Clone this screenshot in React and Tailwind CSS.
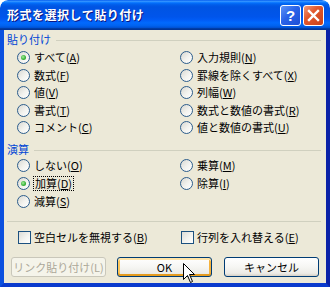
import React from "react";

function Radio({ checked }) {
  return (
    <span className="w-[13px] h-[13px] shrink-0 rounded-full border border-[#2c5d8c] bg-[linear-gradient(135deg,#d8d8d2_0%,#f3f3ef_55%,#ffffff_100%)] flex items-center justify-center">
      {checked && (
        <span className="w-[5px] h-[5px] rounded-full bg-[radial-gradient(circle_at_40%_40%,#a6ee9c_0%,#3cb43c_55%,#1e8f1e_100%)]" />
      )}
    </span>
  );
}

function Check() {
  return (
    <span className="w-[13px] h-[13px] shrink-0 border border-[#1c5180] bg-[linear-gradient(135deg,#dcdcd7_0%,#f3f3ef_55%,#ffffff_100%)]" />
  );
}

function RadioItem({ checked, label, k, focus }) {
  return (
    <div className="flex items-center h-full">
      <Radio checked={checked} />
      <span
        className={
          focus
            ? "ml-[3px] px-[1px] leading-[13px] border border-dotted border-black"
            : "ml-[4px] leading-[13px]"
        }
      >
        {label}(<u className="underline-offset-[1px]">{k}</u>)
      </span>
    </div>
  );
}

function GroupLabel({ text, cls }) {
  return (
    <div className={"flex items-center pl-[3px] pr-[5px] " + cls}>
      <span className="text-[#0046d5] leading-none">{text}</span>
      <span className="flex-1 h-px ml-[5px] bg-[#d0d0bf] mt-[2px]" />
    </div>
  );
}

export default function App() {
  return (
    <div className="relative w-[330px] h-[287px] flex flex-col overflow-hidden rounded-t-[8px] bg-white text-[11px] text-black [font-family:'Noto_Sans_CJK_JP','Noto_Sans',sans-serif]">
      {/* title bar */}
      <div className="h-[30px] shrink-0 flex items-center pl-[7px] pr-[6px] rounded-t-[8px] bg-[linear-gradient(to_bottom,#0058ee_0%,#3593ff_4%,#288eff_6%,#127dff_8%,#036ffc_10%,#0262ee_14%,#0057e5_20%,#0054e3_24%,#0055eb_56%,#005bf5_66%,#026afe_76%,#0062ef_86%,#0052d6_92%,#0040ab_94%,#003092_100%)]">
        <span className="text-white font-bold text-[12px] tracking-[0.5px] [text-shadow:1px_1px_0_#0a1883]">
          形式を選択して貼り付け
        </span>
        <div className="ml-auto flex gap-[2px]">
          <div className="w-[21px] h-[21px] rounded-[3px] border border-white bg-[linear-gradient(135deg,#5e94f6_0%,#2a63e8_45%,#1c4fd6_100%)] flex items-center justify-center text-white font-bold text-[15px] leading-none [font-family:'Liberation_Sans',sans-serif]">
            ?
          </div>
          <div className="w-[21px] h-[21px] rounded-[3px] border border-white bg-[linear-gradient(135deg,#f09a7c_0%,#e2582d_40%,#c9411a_100%)] flex items-center justify-center">
            <svg width="13" height="13" viewBox="0 0 13 13">
              <path d="M2 2 L11 11 M11 2 L2 11" stroke="white" strokeWidth="2.4" strokeLinecap="square" />
            </svg>
          </div>
        </div>
      </div>

      {/* body with frame */}
      <div className="flex-1 flex flex-col border-l-[4px] border-r-[4px] border-b-[4px] border-l-[#0b50df] border-r-[#0a22a8] border-b-[#0a3acd] bg-[#ece9d8]">
        <GroupLabel text="貼り付け" cls="h-[19px]" />
        <div className="grid grid-cols-[163px_1fr] grid-rows-[repeat(5,17.5px)] pl-[13px]">
          <RadioItem checked label="すべて" k="A" />
          <RadioItem label="入力規則" k="N" />
          <RadioItem label="数式" k="F" />
          <RadioItem label="罫線を除くすべて" k="X" />
          <RadioItem label="値" k="V" />
          <RadioItem label="列幅" k="W" />
          <RadioItem label="書式" k="T" />
          <RadioItem label="数式と数値の書式" k="R" />
          <RadioItem label="コメント" k="C" />
          <RadioItem label="値と数値の書式" k="U" />
        </div>

        <GroupLabel text="演算" cls="h-[14px] mt-[5.5px]" />
        <div className="grid grid-cols-[163px_1fr] grid-rows-[repeat(3,18px)] pl-[13px]">
          <RadioItem label="しない" k="O" />
          <RadioItem label="乗算" k="M" />
          <RadioItem checked focus label="加算" k="D" />
          <RadioItem label="除算" k="I" />
          <RadioItem label="減算" k="S" />
        </div>

        <div className="h-px mt-[11px] ml-[3px] mr-[5px] bg-[#d0d0bf]" />

        <div className="h-[18px] mt-[6.5px] grid grid-cols-[163px_1fr] pl-[14px]">
          <div className="flex items-center">
            <Check />
            <span className="ml-[3px]">
              空白セルを無視する(<u>B</u>)
            </span>
          </div>
          <div className="flex items-center">
            <Check />
            <span className="ml-[3px]">
              行列を入れ替える(<u>E</u>)
            </span>
          </div>
        </div>

        <div className="h-[20px] mt-[10.5px] flex pl-[7px]">
          <div className="w-[95px] h-[20px] rounded-[3px] border border-[#c9c7ba] bg-[#f5f4ea] text-[#aca899] flex items-center justify-center">
            リンク貼り付け(L)
          </div>
          <div className="ml-[11px] w-[95px] h-[20px] rounded-[3px] border border-[#003c74] bg-[linear-gradient(to_bottom,#ffffff_0%,#f6f6f3_50%,#ecebe6_85%,#d6d0c5_100%)] shadow-[inset_0_2px_0_#ffe4a8,inset_0_-2px_0_#e59b1f,inset_2px_0_0_#fbc65c,inset_-2px_0_0_#f5b23c] flex items-center justify-center">
            OK
          </div>
          <div className="ml-[12px] w-[95px] h-[20px] rounded-[3px] border border-[#003c74] bg-[linear-gradient(to_bottom,#ffffff_0%,#f6f6f3_50%,#ecebe6_85%,#d6d0c5_100%)] flex items-center justify-center">
            キャンセル
          </div>
        </div>
      </div>

      {/* mouse cursor overlay */}
      <svg className="absolute left-[183px] top-[263px]" width="13" height="21" viewBox="0 0 13 21">
        <path
          d="M0.5 0.5 L0.5 16.5 L4.5 12.5 L7.5 19.5 L9.5 18.5 L6.5 11.5 L11.5 11.5 Z"
          fill="white"
          stroke="black"
          strokeWidth="1"
        />
      </svg>
    </div>
  );
}
